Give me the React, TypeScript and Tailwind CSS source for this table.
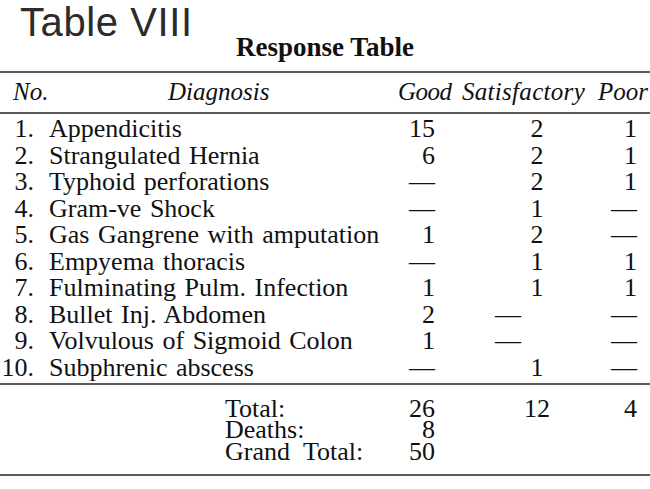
import React from 'react';

type Row = {
  no: string;
  diagnosis: string;
  good: string;
  sat: string;
  poor: string;
};

const rows: Row[] = [
  { no: '1.', diagnosis: 'Appendicitis', good: '15', sat: '2', poor: '1' },
  { no: '2.', diagnosis: 'Strangulated Hernia', good: '6', sat: '2', poor: '1' },
  { no: '3.', diagnosis: 'Typhoid perforations', good: '—', sat: '2', poor: '1' },
  { no: '4.', diagnosis: 'Gram-ve Shock', good: '—', sat: '1', poor: '—' },
  { no: '5.', diagnosis: 'Gas Gangrene with amputation', good: '1', sat: '2', poor: '—' },
  { no: '6.', diagnosis: 'Empyema thoracis', good: '—', sat: '1', poor: '1' },
  { no: '7.', diagnosis: 'Fulminating Pulm. Infection', good: '1', sat: '1', poor: '1' },
  { no: '8.', diagnosis: 'Bullet Inj. Abdomen', good: '2', sat: '—', poor: '—' },
  { no: '9.', diagnosis: 'Volvulous of Sigmoid Colon', good: '1', sat: '—', poor: '—' },
  { no: '10.', diagnosis: 'Subphrenic abscess', good: '—', sat: '1', poor: '—' },
];

const totals = [
  { label: 'Total:', good: '26', sat: '12', poor: '4' },
  { label: 'Deaths:', good: '8', sat: '', poor: '' },
  { label: 'Grand Total:', good: '50', sat: '', poor: '' },
];

// printed rule, a bit uneven like the scan
const Rule = ({ className = '' }: { className?: string }) => (
  <div className={`h-[2px] w-full bg-[#3d3d3d] opacity-85 ${className}`} />
);

const satClass = (value: string) =>
  value === '—'
    ? 'text-center pl-[40px] pr-[58px]'
    : 'text-center pl-[40px]';

export default function App() {
  return (
    <div className="w-[650px] h-[489px] bg-white text-[#111111] overflow-hidden">
      <div className="pt-[6px] pl-[20px] text-[40px] leading-[32px] tracking-[0.6px] text-[#2b2b2b] font-['Liberation_Sans',Arial,sans-serif]">
        Table VIII
      </div>

      <div className="font-['Liberation_Serif','Times_New_Roman',serif]">
        <div className="text-center text-[27px] leading-[19px] font-bold">
          Response Table
        </div>

        <Rule className="mt-[14px]" />

        <div className="flex h-[39px] items-start text-[25px] leading-[37px] italic">
          <div className="w-[168px] pl-[13px]">No.</div>
          <div className="w-[230px]">Diagnosis</div>
          <div className="w-[64px] tracking-[-0.5px]">Good</div>
          <div className="w-[136px] tracking-[0.3px]">Satisfactory</div>
          <div>Poor</div>
        </div>

        <Rule />

        <div className="pt-[2px] text-[26px] leading-[26.5px] [word-spacing:2px]">
          {rows.map((row) => (
            <div
              key={row.no}
              className="grid h-[26.5px] grid-cols-[34px_361px_40px_164px_38px]"
            >
              <div className="text-right">{row.no}</div>
              <div className="pl-[15px] whitespace-nowrap">{row.diagnosis}</div>
              <div className="text-right">{row.good}</div>
              <div className={satClass(row.sat)}>{row.sat}</div>
              <div className="text-right">{row.poor}</div>
            </div>
          ))}
        </div>

        <Rule className="mt-[2px]" />

        <div className="mt-[12.5px] text-[26px] leading-[21.5px] [word-spacing:7px]">
          {totals.map((t) => (
            <div
              key={t.label}
              className="grid h-[21.5px] grid-cols-[395px_40px_164px_38px]"
            >
              <div className="pl-[225px] whitespace-nowrap">{t.label}</div>
              <div className="text-right">{t.good}</div>
              <div className="text-center pl-[40px]">{t.sat}</div>
              <div className="text-right">{t.poor}</div>
            </div>
          ))}
        </div>

        <Rule className="mt-[12px]" />
      </div>
    </div>
  );
}
